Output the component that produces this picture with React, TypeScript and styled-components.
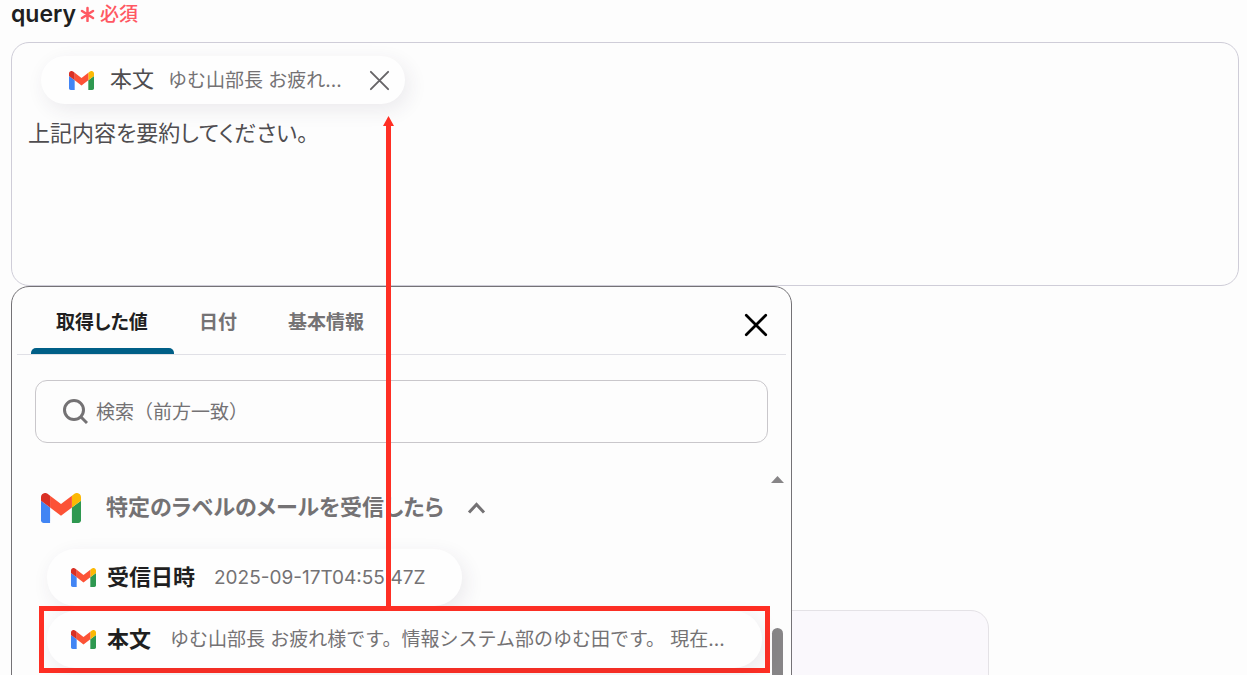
import React from "react";
import styled, { createGlobalStyle, css } from "styled-components";

const red = "#ff2f24";
const grey = "#747274";

const GlobalStyle = createGlobalStyle`
  *, *::before, *::after { box-sizing: border-box; }
  body {
    margin: 0;
    background: #fdfdfd;
    color: #1f1f21;
    font-family: Inter, "Noto Sans CJK JP", sans-serif;
  }
  button, input, textarea { font: inherit; color: inherit; }
`;

const proportionalKana = css`
  font-feature-settings: "palt";
  font-kerning: none;
`;

const Page = styled.main`
  display: flex;
  flex-direction: column;
  height: 100vh;
  padding: 0 8px 0 11px;
  overflow: hidden;
`;

const FieldLabel = styled.label`
  display: flex;
  align-items: center;
  height: 28px;
  margin-bottom: 14px;
  font-size: 23px;
  font-weight: 600;
`;

const Required = styled.span`
  display: flex;
  align-items: center;
  gap: 5px;
  margin-left: 4px;
  color: #ff5862;
  font-size: 19px;
  font-weight: 500;
`;

const RequiredText = styled.span`
  padding-bottom: 4px;
`;

const Editor = styled.section`
  display: flex;
  flex-direction: column;
  align-items: flex-start;
  flex: none;
  height: 244px;
  padding: 13px 16px;
  border: 1px solid #cfcdd8;
  border-radius: 18px;
`;

const EditorText = styled.textarea`
  flex: 1;
  width: 100%;
  margin-top: 11px;
  padding: 0;
  border: 0;
  outline: 0;
  resize: none;
  background: transparent;
  color: #4f4d50;
  font-size: 22px;
  line-height: 36px;
  ${proportionalKana}
`;

const IconButton = styled.button`
  display: grid;
  place-items: center;
  flex: none;
  padding: 0;
  border: 0;
  background: none;
  cursor: pointer;
`;

const pill = css`
  display: flex;
  align-items: center;
  border-radius: 28px;
  background: #fefefe;
  box-shadow: 4px 6px 20px rgba(60, 40, 80, 0.09);
`;

const SelectedChip = styled.div`
  ${pill}
  width: 364px;
  height: 48px;
  margin-left: 13px;
  padding: 0 14px 0 28px;
`;

const ChipName = styled.span<{ $strong?: boolean }>`
  flex: none;
  margin: ${(p) => (p.$strong ? "0 19px 0 11px" : "0 14px 0 16px")};
  padding-bottom: 6px;
  color: ${(p) => (p.$strong ? "#1f1f21" : "#4f4d50")};
  font-size: 22px;
  font-weight: ${(p) => (p.$strong ? 700 : 400)};
`;

const ChipValue = styled.span`
  flex: 1;
  padding-bottom: 4px;
  overflow: hidden;
  color: ${grey};
  font-size: 19px;
  font-weight: 400;
  text-align: left;
  white-space: nowrap;
`;

const DateValue = styled(ChipValue)`
  padding: 0;
`;

const Below = styled.div`
  position: relative;
  flex: 1;
`;

const NextCard = styled.div`
  width: 80%;
  max-width: 978px;
  height: 200px;
  margin-top: 324px;
  border: 1px solid #e4e2e6;
  border-radius: 18px;
  background: #faf8fc;
`;

const Popup = styled.section`
  position: absolute;
  top: 0;
  left: 0;
  display: flex;
  flex-direction: column;
  width: 781px;
  height: 480px;
  padding: 0 5px;
  border: 1px solid #747276;
  border-radius: 18px;
  background: #fdfdfd;
`;

const Tabs = styled.div`
  display: flex;
  align-items: stretch;
  flex: none;
  height: 68px;
  padding: 0 17px 0 14px;
  border-bottom: 1px solid #e0e0e6;
`;

const Tab = styled.button<{ $active?: boolean }>`
  position: relative;
  padding: 0 26px 0 25px;
  border: 0;
  background: none;
  color: ${(p) => (p.$active ? "#1f1f21" : grey)};
  font-size: 19px;
  font-weight: 700;
  cursor: pointer;
  ${proportionalKana}

  ${(p) =>
    p.$active &&
    css`
      &::after {
        content: "";
        position: absolute;
        inset: auto 0 0;
        height: 6px;
        border-radius: 5px 5px 0 0;
        background: #005f87;
      }
    `}
`;

const CloseButton = styled(IconButton)`
  align-self: center;
  margin: 8px 0 0 auto;
`;

const SearchBox = styled.label`
  display: flex;
  align-items: center;
  flex: none;
  gap: 8px;
  height: 63px;
  margin: 25px 18px 0;
  padding: 0 27px;
  border: 1px solid #c9c7cb;
  border-radius: 12px;
`;

const SearchInput = styled.input`
  flex: 1;
  min-width: 0;
  padding: 2px 0 0;
  border: 0;
  outline: 0;
  background: none;
  font-size: 19px;
  &::placeholder { color: ${grey}; opacity: 1; }
`;

const Results = styled.div`
  display: flex;
  flex: 1;
  margin-top: 24px;
`;

const List = styled.div`
  flex: 1;
  min-width: 0;
  padding: 20px 0 0 22px;
`;

const GroupButton = styled.button`
  display: flex;
  align-items: center;
  height: 42px;
  padding: 0 0 0 2px;
  border: 0;
  background: none;
  color: ${grey};
  font-size: 22px;
  font-weight: 700;
  cursor: pointer;
  ${proportionalKana}
`;

const GroupTitle = styled.span`
  margin: 0 23px 0 25px;
  padding-bottom: 6px;
`;

const ValueButton = styled.button`
  ${pill}
  height: 57px;
  margin: 20px 0 0 8px;
  padding: 0 37px 0 24px;
  border: 0;
  cursor: pointer;
`;

const Highlight = styled.div`
  position: relative;
  width: 731px;
  height: 67px;
  border: 5px solid ${red};

  ${ValueButton} {
    width: 715px;
    margin: 0 0 0 3px;
    padding-right: 24px;
  }
`;

const Arrow = styled.svg`
  position: absolute;
  bottom: 100%;
  left: 339px;
`;

const Scrollbar = styled.div`
  display: flex;
  flex-direction: column;
  align-items: center;
  gap: 145px;
  width: 15px;
  padding-top: 9px;
  margin-right: 1px;
`;

const Thumb = styled.div`
  flex: 1;
  width: 11px;
  border-radius: 6px;
  background: #878587;
`;

function Gmail({ width }: { width: number }) {
  return (
    <svg width={width} height={Math.round(width * 0.75)} viewBox="0 0 88 66" preserveAspectRatio="none" aria-hidden="true">
      <path fill="#4285f4" d="M6 66h14V32L0 17v43c0 3.3 2.7 6 6 6" />
      <path fill="#2e9850" d="M68 66h14c3.3 0 6-2.7 6-6V17L68 32" />
      <path fill="#fbb804" d="M68 6v26l20-15V9c0-7.400-8.500-11.700-14.400-7.200" />
      <path fill="#fc5236" d="M20 32V6l24 18L68 6v26L44 50" />
      <path fill="#d93025" d="M0 9v8l20 15V6l-5.600-4.200C8.500-2.700 0 1.600 0 9" />
    </svg>
  );
}

function Cross({ size, color, stroke }: { size: number; color: string; stroke: number }) {
  return (
    <svg width={size} height={size} viewBox="0 0 24 24" fill="none" stroke={color} strokeWidth={stroke} strokeLinecap="round" aria-hidden="true">
      <path d="M3 3l18 18M21 3L3 21" />
    </svg>
  );
}

export default function App() {
  return (
    <>
      <GlobalStyle />
      <Page>
        <FieldLabel htmlFor="query">
          query
          <Required>
            <svg width="15" height="16" viewBox="0 0 15 16" stroke="#ff5862" strokeWidth="2.500" strokeLinecap="round" aria-hidden="true">
              <path d="M7.500 2v13M2 5l11 7M13 5L2 12" />
            </svg>
            <RequiredText>必須</RequiredText>
          </Required>
        </FieldLabel>
        <Editor>
          <SelectedChip>
            <Gmail width={25} />
            <ChipName>本文</ChipName>
            <ChipValue>ゆむ山部長 お疲れ...</ChipValue>
            <IconButton type="button" aria-label="削除">
              <Cross size={23} color="#666467" stroke={2} />
            </IconButton>
          </SelectedChip>
          <EditorText id="query" defaultValue="上記内容を要約してください。" />
        </Editor>
        <Below>
          <NextCard />
          <Popup>
            <Tabs>
              <Tab type="button" $active>取得した値</Tab>
              <Tab type="button">日付</Tab>
              <Tab type="button">基本情報</Tab>
              <CloseButton type="button" aria-label="閉じる">
                <Cross size={26} color="#000" stroke={2.5} />
              </CloseButton>
            </Tabs>
            <SearchBox>
              <svg width="25" height="26" viewBox="0 0 25 26" fill="none" stroke="#747274" strokeWidth="3" aria-hidden="true">
                <circle cx="11" cy="11" r="9.500" />
                <path d="M18 18l6 6" />
              </svg>
              <SearchInput type="text" placeholder="検索（前方一致）" aria-label="検索" />
            </SearchBox>
            <Results>
              <List>
                <GroupButton type="button">
                  <Gmail width={40} />
                  <GroupTitle>特定のラベルのメールを受信したら</GroupTitle>
                  <svg width="19" height="12" viewBox="0 0 19 12" fill="none" stroke="#747274" strokeWidth="3" aria-hidden="true">
                    <path d="M2 10.500l7.500-8 7.500 8" />
                  </svg>
                </GroupButton>
                <ValueButton type="button">
                  <Gmail width={25} />
                  <ChipName $strong>受信日時</ChipName>
                  <DateValue>2025-09-17T04:55:47Z</DateValue>
                </ValueButton>
                <Highlight>
                  <ValueButton type="button">
                    <Gmail width={25} />
                    <ChipName $strong>本文</ChipName>
                    <ChipValue>ゆむ山部長 お疲れ様です。情報システム部のゆむ田です。 現在...</ChipValue>
                  </ValueButton>
                  <Arrow width="11" height="495" viewBox="0 0 11 495" fill={red} aria-hidden="true">
                    <path d="M5.500 0L11 10H8v485H3V10H0z" />
                  </Arrow>
                </Highlight>
              </List>
              <Scrollbar>
                <svg width="13" height="7" viewBox="0 0 13 7" fill="#878587" aria-hidden="true">
                  <path d="M6.500 0L13 7H0z" />
                </svg>
                <Thumb />
              </Scrollbar>
            </Results>
          </Popup>
        </Below>
      </Page>
    </>
  );
}
